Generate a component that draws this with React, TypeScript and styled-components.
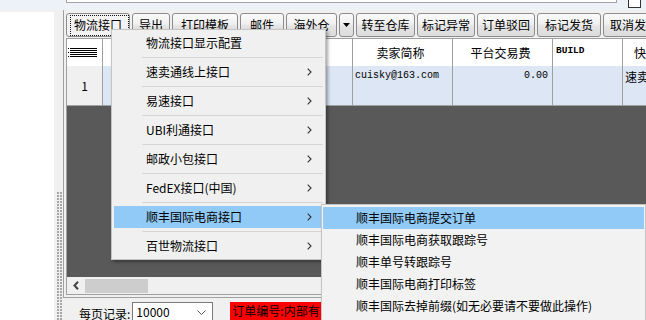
import React from "react";
import styled, { createGlobalStyle, css } from "styled-components";

const GlobalStyle = createGlobalStyle`
  html, body { margin: 0; padding: 0; overflow: hidden; background: #f0f0f0; }
  body { font-family: "Noto Sans CJK SC", "Liberation Sans", sans-serif; font-size: 12px; color: #000; }
  * { box-sizing: border-box; }
`;

const Page = styled.div`
  position: relative;
  width: 646px;
  height: 320px;
  overflow: hidden;
  display: flex;
  flex-direction: column;
  background: #f0f0f0;
`;

const TopStrip = styled.div`
  flex: none;
  height: 10px;
  background: #edf2f9;
  display: flex;
  align-items: flex-start;
  padding-left: 66px;
`;

const TopInput = styled.div`
  width: 551px;
  height: 3px;
  background: #fff;
  border: 1px solid #a3a3a3;
  border-top: none;
`;

const TopCheck = styled.div`
  margin-left: 11px;
  width: 13px;
  height: 8px;
  background: #fff;
  border: 1px solid #333;
  border-top: none;
`;

const Body = styled.div`
  flex: 1;
  min-height: 0;
  display: flex;
`;

const LeftPane = styled.div`
  flex: none;
  width: 54px;
  margin-top: 2px;
  background: #fff;
`;

const Splitter = styled.div`
  flex: none;
  width: 9px;
  display: flex;
  flex-direction: column;
  justify-content: flex-end;
  padding-left: 3px;
`;

const Grip = styled.div`
  width: 5px;
  height: 128px;
  background-image: radial-gradient(circle at 1px 1px, #a6a6a6 0.9px, transparent 1.1px);
  background-size: 3px 3px;
`;

const MainPanel = styled.div`
  flex: 1;
  min-width: 0;
  display: flex;
  flex-direction: column;
`;

const Frame = styled.div`
  flex: none;
  height: 288px;
  border-left: 1px solid #a0a0a0;
  border-bottom: 1px solid #a0a0a0;
  padding: 0 0 2px 2px;
  display: flex;
  flex-direction: column;
`;

const Toolbar = styled.div`
  flex: none;
  height: 28px;
  padding-top: 3px;
  display: flex;
  gap: 2px;
  overflow: hidden;
`;

const ToolButton = styled.div<{ $w: number; $focus?: boolean }>`
  position: relative;
  flex: none;
  width: ${(p) => p.$w}px;
  height: 24px;
  border: 1px solid #8c8c8c;
  border-radius: 3px;
  background: linear-gradient(#fbfbfb 0%, #f0f0f0 45%, #e4e4e4 55%, #dcdcdc 100%);
  display: flex;
  align-items: center;
  justify-content: center;
  font-size: 12px;
  line-height: 1;
  white-space: nowrap;
  ${(p) =>
    p.$focus &&
    css`
      background: #f3f3f3;
      &::after {
        content: "";
        position: absolute;
        inset: 1px 0 0 3px;
        border: 1px dotted #111;
      }
    `}
`;

const GridBox = styled.div`
  flex: 1;
  min-height: 0;
  border: 1px solid #a0a0a0;
  border-right: none;
  display: flex;
  flex-direction: column;
  overflow: hidden;
`;

const GridTable = styled.div`
  flex: none;
  display: grid;
  grid-template-columns: 36px 125px 125px 100px 100px 70px 140px;
  grid-template-rows: 27px 40px;
  width: max-content;
`;

const HeadCell = styled.div<{ $align?: "left" | "center" }>`
  background: #fff;
  border-right: 1px solid #a0a0a0;
  display: flex;
  align-items: center;
  justify-content: ${(p) => (p.$align === "left" ? "flex-start" : "center")};
  padding: 0 4px 0 ${(p) => (p.$align === "left" ? "11px" : "0")};
  font-size: 12px;
  line-height: 1;
  white-space: nowrap;
  overflow: hidden;
`;

const MonoHead = styled.div`
  background: #fff;
  border-right: 1px solid #a0a0a0;
  padding: 7px 3px 0;
  font-family: "Liberation Mono", monospace;
  font-size: 9.5px;
  font-weight: bold;
  line-height: 1;
`;

const IndexCell = styled.div`
  background: #f0f0f0;
  border-right: 1px solid #a0a0a0;
  border-bottom: 1px solid #a0a0a0;
  display: flex;
  align-items: center;
  justify-content: center;
  font-size: 12px;
  line-height: 1;
`;

const DataCell = styled.div<{ $right?: boolean; $mono?: boolean }>`
  background: #dce6f4;
  border-right: 1px solid #a0a0a0;
  border-bottom: 1px solid #a0a0a0;
  padding: 5px 4px 0 2px;
  text-align: ${(p) => (p.$right ? "right" : "left")};
  font-family: ${(p) =>
    p.$mono ? `"Liberation Mono", monospace` : `"Noto Sans CJK SC", sans-serif`};
  font-size: ${(p) => (p.$mono ? "10px" : "12px")};
  line-height: ${(p) => (p.$mono ? "10px" : "12px")};
  white-space: nowrap;
  overflow: hidden;
`;

const DarkArea = styled.div`
  flex: 1;
  background: #595959;
`;

const HScroll = styled.div`
  flex: none;
  height: 17px;
  background: #f0f0f0;
  display: flex;
  align-items: center;
`;

const ScrollArrow = styled.div`
  width: 17px;
  height: 17px;
  display: flex;
  align-items: center;
  justify-content: center;
`;

const ScrollThumb = styled.div`
  width: 63px;
  height: 14px;
  margin-left: 1px;
  background: #cdcdcd;
`;

const Footer = styled.div`
  flex: 1;
  display: flex;
  align-items: flex-start;
  padding: 4px 0 0 16px;
  white-space: nowrap;
`;

const FooterLabel = styled.span`
  height: 20px;
  line-height: 20px;
  font-size: 12px;
  padding-top: 2px;
`;

const SelectBox = styled.div`
  margin-left: 2px;
  width: 81px;
  height: 20px;
  background: #fff;
  border: 1px solid #7a7a7a;
  display: flex;
  align-items: center;
  justify-content: space-between;
  padding: 0 6px 0 3px;
  font-size: 12px;
  line-height: 1;
`;

const RedLabel = styled.div`
  margin-left: 17px;
  height: 18px;
  background: #ff0000;
  padding: 0 2px;
  font-size: 12px;
  line-height: 18px;
`;

const Menu = styled.div`
  position: absolute;
  left: 111px;
  top: 29px;
  width: 215px;
  background: #f0f0f0;
  border: 1px solid #c4c4c4;
  padding: 2px 0;
  box-shadow: 2px 2px 3px rgba(0, 0, 0, 0.35);
  z-index: 5;
`;

const MenuItem = styled.div<{ $active?: boolean }>`
  height: 22px;
  margin: 0 2px;
  padding: 0 11px 0 32px;
  display: flex;
  align-items: center;
  justify-content: space-between;
  font-size: 12px;
  line-height: 1;
  white-space: nowrap;
  background: ${(p) => (p.$active ? "#91c9f7" : "transparent")};
`;

const MenuSeparator = styled.div`
  height: 7px;
  display: flex;
  align-items: center;
  padding: 0 2px 0 30px;
  &::before {
    content: "";
    flex: 1;
    height: 1px;
    background: #d5d5d5;
  }
`;

const SubMenu = styled.div`
  position: absolute;
  left: 321px;
  top: 204px;
  width: 325px;
  height: 117px;
  background: #f2f2f2;
  border: 1px solid #c4c4c4;
  padding: 2px 1px 0;
  box-shadow: 2px 2px 3px rgba(0, 0, 0, 0.3);
  z-index: 6;
`;

const SubItem = styled.div<{ $active?: boolean }>`
  height: 22px;
  padding-left: 33px;
  display: flex;
  align-items: center;
  font-size: 12px;
  line-height: 1;
  white-space: nowrap;
  background: ${(p) => (p.$active ? "#91c9f7" : "transparent")};
`;

const Chevron = () => (
  <svg width="5" height="8" viewBox="0 0 5 8">
    <path d="M0.7 0.7 L4 4 L0.7 7.3" fill="none" stroke="#333" strokeWidth="1.1" />
  </svg>
);

const DownTriangle = () => (
  <svg width="7" height="4" viewBox="0 0 7 4">
    <path d="M0 0 H7 L3.5 4 Z" fill="#000" />
  </svg>
);

const SelectChevron = () => (
  <svg width="9" height="5" viewBox="0 0 9 5">
    <path d="M0.5 0.5 L4.5 4.5 L8.5 0.5" fill="none" stroke="#555" strokeWidth="1" />
  </svg>
);

const LeftArrow = () => (
  <svg width="6" height="9" viewBox="0 0 6 9">
    <path d="M5 0.8 L1.5 4.5 L5 8.2" fill="none" stroke="#444" strokeWidth="2" />
  </svg>
);

const RowHeaderIcon = () => (
  <svg width="30" height="9" viewBox="0 0 30 9" shapeRendering="crispEdges">
    {[0, 2, 4, 6, 8].map((y) => (
      <rect key={y} x="2" y={y} width="27" height="1" fill="#000" />
    ))}
    {[0, 4, 8].map((y) => (
      <rect key={"d" + y} x="0" y={y} width="1" height="1" fill="#000" />
    ))}
  </svg>
);

const toolButtons: { label: React.ReactNode; w: number; focus?: boolean }[] = [
  { label: "物流接口", w: 64, focus: true },
  { label: "导出", w: 38 },
  { label: "打印模板", w: 66 },
  { label: "邮件", w: 44 },
  { label: "海外仓", w: 51 },
  { label: <DownTriangle />, w: 15 },
  { label: "转至仓库", w: 59 },
  { label: "标记异常", w: 58 },
  { label: "订单驳回", w: 58 },
  { label: "标记发货", w: 64 },
  { label: "取消发货", w: 62 },
];

const menuItems: { label: string; sub?: boolean; active?: boolean }[] = [
  { label: "物流接口显示配置" },
  { label: "速卖通线上接口", sub: true },
  { label: "易速接口", sub: true },
  { label: "UBI利通接口", sub: true },
  { label: "邮政小包接口", sub: true },
  { label: "FedEX接口(中国)", sub: true },
  { label: "顺丰国际电商接口", sub: true, active: true },
  { label: "百世物流接口", sub: true },
];

const subItems = [
  "顺丰国际电商提交订单",
  "顺丰国际电商获取跟踪号",
  "顺丰单号转跟踪号",
  "顺丰国际电商打印标签",
  "顺丰国际去掉前缀(如无必要请不要做此操作)",
];

export default function App() {
  return (
    <>
      <GlobalStyle />
      <Page>
        <TopStrip>
          <TopInput />
          <TopCheck />
        </TopStrip>
        <Body>
          <LeftPane />
          <Splitter>
            <Grip />
          </Splitter>
          <MainPanel>
            <Frame>
              <Toolbar>
                {toolButtons.map((b, i) => (
                  <ToolButton key={i} $w={b.w} $focus={b.focus}>
                    {b.label}
                  </ToolButton>
                ))}
              </Toolbar>
              <GridBox>
                <GridTable>
                  <HeadCell>
                    <RowHeaderIcon />
                  </HeadCell>
                  <HeadCell />
                  <HeadCell />
                  <HeadCell>卖家简称</HeadCell>
                  <HeadCell>平台交易费</HeadCell>
                  <MonoHead>BUILD</MonoHead>
                  <HeadCell $align="left">快递方式</HeadCell>

                  <IndexCell>1</IndexCell>
                  <DataCell />
                  <DataCell />
                  <DataCell $mono>cuisky@163.com</DataCell>
                  <DataCell $mono $right>0.00</DataCell>
                  <DataCell />
                  <DataCell>速卖通线上发货</DataCell>
                </GridTable>
                <DarkArea />
                <HScroll>
                  <ScrollArrow>
                    <LeftArrow />
                  </ScrollArrow>
                  <ScrollThumb />
                </HScroll>
              </GridBox>
            </Frame>
            <Footer>
              <FooterLabel>每页记录:</FooterLabel>
              <SelectBox>
                <span>10000</span>
                <SelectChevron />
              </SelectBox>
              <RedLabel>订单编号:内部有单号</RedLabel>
            </Footer>
          </MainPanel>
        </Body>

        <Menu>
          {menuItems.map((m, i) => (
            <React.Fragment key={m.label}>
              {i > 0 && <MenuSeparator />}
              <MenuItem $active={m.active}>
                <span>{m.label}</span>
                {m.sub && <Chevron />}
              </MenuItem>
            </React.Fragment>
          ))}
        </Menu>

        <SubMenu>
          {subItems.map((s, i) => (
            <SubItem key={s} $active={i === 0}>
              {s}
            </SubItem>
          ))}
        </SubMenu>
      </Page>
    </>
  );
}
